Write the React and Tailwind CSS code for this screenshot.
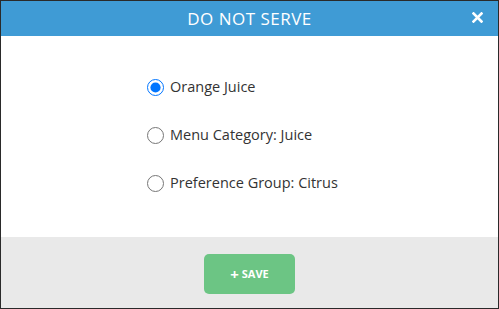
import React, { useState } from "react";

const options = ["Orange Juice", "Menu Category: Juice", "Preference Group: Citrus"];

export default function App() {
  const [sel, setSel] = useState(0);
  return (
    <div className="w-[499px] h-[309px] border border-[#2a2a2a] bg-white flex flex-col overflow-hidden" style={{ fontFamily: '"Open Sans", sans-serif' }}>
      <div className="h-[35px] bg-[#3f9bd5] flex items-center justify-center relative shrink-0">
        <span className="text-white text-[17px] tracking-[0.5px]" style={{ fontFamily: '"Open Sans", sans-serif' }}>DO NOT SERVE</span>
        <svg className="absolute right-[15px] top-[11px]" width="11" height="11" viewBox="0 0 11 11">
          <path d="M1.5 1.5 L9.5 9.5 M9.5 1.5 L1.5 9.5" stroke="white" strokeWidth="2.6" strokeLinecap="square" />
        </svg>
      </div>
      <div className="h-[201px] shrink-0 pt-[27px] pl-[146px] flex flex-col">
        {options.map((o, i) => (
          <label key={o} className="h-[48px] flex items-center gap-[6px] cursor-pointer">
            <input
              type="radio"
              name="dns"
              checked={sel === i}
              onChange={() => setSel(i)}
              className="w-[17px] h-[17px] m-0"
            />
            <span className="text-[14.5px] text-[#333]">{o}</span>
          </label>
        ))}
      </div>
      <div className="flex-1 bg-[#e9e9e9] flex justify-center pt-[17px]">
        <button className="w-[91px] h-[40px] rounded-[5px] bg-[#6cc584] text-white text-[11px] font-bold flex items-center justify-center gap-[3px]">
          <span className="text-[15px] leading-none font-bold">+</span>
          <span>SAVE</span>
        </button>
      </div>
    </div>
  );
}
